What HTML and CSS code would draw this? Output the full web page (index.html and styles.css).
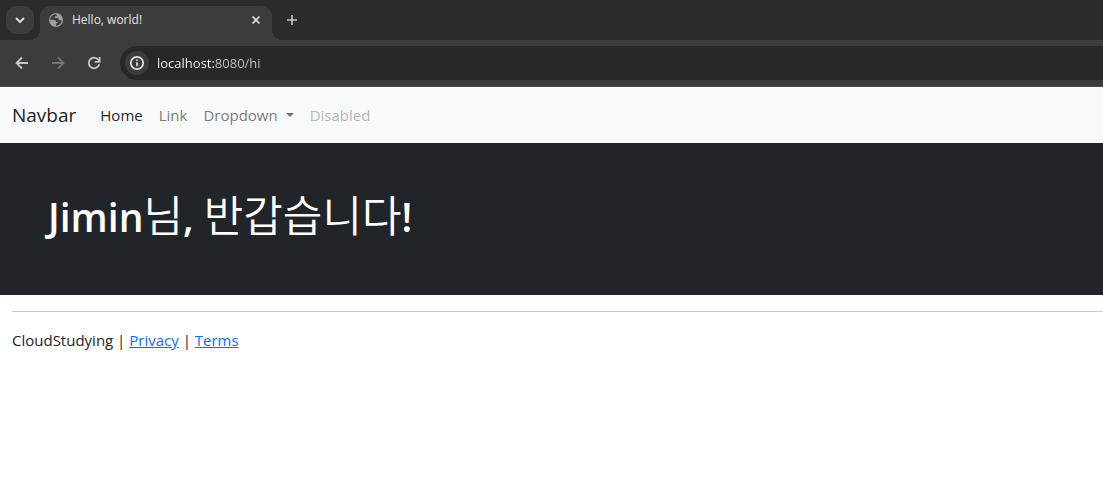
FILE: index.html
```html
<!DOCTYPE html>
<html lang="ko">
<head>
  <meta charset="UTF-8" />
  <meta name="viewport" content="width=device-width, initial-scale=1" />
  <title>Hello, world!</title>
  <link rel="stylesheet" href="styles.css">
</head>
<body>

  <!-- Browser window -->
  <div class="browser">
    <div class="tab-strip">
      <button class="tab-search" aria-label="Search tabs">
        <svg width="16" height="16" viewBox="0 0 16 16" fill="none" stroke="#e3e3e3" stroke-width="1.800"><path d="M4 6l4 4 4-4" /></svg>
      </button>
      <div class="tab">
        <svg width="16" height="16" viewBox="0 0 16 16">
          <circle cx="8" cy="8" r="7" fill="#9aa0a6" />
          <path fill="#3c3c3c" d="M8.500 2.400C5 2 2.200 4.700 2.200 7.700l3.600.1c1.400 0 2.200.8 2.200 2.100h1.700v1.300H8v2.500c3 .2 5.700-2.400 5.700-5.400h-2.100c-.7 0-1.200-.5-1.200-1.200V6H6.800V4.300h1.300c.5 0 .7-.5.7-.9z" />
        </svg>
        <span class="tab-title">Hello, world!</span>
        <button class="icon-btn" aria-label="Close tab">
          <svg width="16" height="16" viewBox="0 0 16 16" fill="none" stroke="#e3e3e3" stroke-width="1.600"><path d="M4.500 4.500l7 7M11.500 4.500l-7 7" /></svg>
        </button>
      </div>
      <button class="icon-btn new-tab" aria-label="New tab">
        <svg width="16" height="16" viewBox="0 0 16 16" fill="none" stroke="#c7c7c7" stroke-width="1.600"><path d="M8 3v10M3 8h10" /></svg>
      </button>
    </div>

    <div class="toolbar">
      <button class="icon-btn" aria-label="Back">
        <svg width="16" height="16" viewBox="0 0 16 16" fill="none" stroke="#c7c7c7" stroke-width="1.800"><path d="M14 8H3M8 2.500L2.500 8 8 13.500" /></svg>
      </button>
      <button class="icon-btn" aria-label="Forward" disabled>
        <svg width="16" height="16" viewBox="0 0 16 16" fill="none" stroke="#757575" stroke-width="1.800"><path d="M2 8h11M8 2.500L13.500 8 8 13.500" /></svg>
      </button>
      <button class="icon-btn" aria-label="Reload">
        <svg width="16" height="16" viewBox="0 0 16 16" fill="none" stroke="#c7c7c7" stroke-width="1.800"><path d="M13.200 9.200A5.300 5.300 0 1 1 12.300 4.800L13.500 6.200M13.600 2v4.800H8.800" /></svg>
      </button>
      <div class="address-bar">
        <button class="site-info" aria-label="View site information">
          <svg width="16" height="16" viewBox="0 0 16 16" fill="none" stroke="#e3e3e3" stroke-width="1.700"><circle cx="8" cy="8" r="6.200" /><path d="M8 7.200v4M8 4.500v1.600" /></svg>
        </button>
        <input class="url" type="text" value="localhost:8080/hi" aria-label="Address" spellcheck="false">
      </div>
    </div>
  </div>

  <!-- Navbar -->
  <nav class="navbar">
    <a class="navbar-brand" href="#">Navbar</a>
    <ul class="navbar-nav">
      <li><a class="nav-link active" href="#">Home</a></li>
      <li><a class="nav-link" href="#">Link</a></li>
      <li><a class="nav-link dropdown-toggle" href="#" role="button">Dropdown</a></li>
      <li><a class="nav-link disabled" href="#" aria-disabled="true">Disabled</a></li>
    </ul>
  </nav>

  <!-- Greeting -->
  <div class="jumbotron">
    <h1>Jimin<span class="hangul">님</span>, <span class="hangul">반갑습니다</span>!</h1>
  </div>

  <!-- Footer -->
  <footer class="footer">
    <hr>
    <p>CloudStudying | <a href="#">Privacy</a> | <a href="#">Terms</a></p>
  </footer>

</body>
</html>
```
FILE: styles.css
```css
* {
  box-sizing: border-box;
}
body {
  margin: 0;
  font-family: "Segoe UI", "Open Sans", "Noto Sans CJK KR", sans-serif;
  font-size: 15px;
  line-height: 24px;
  color: #212529;
  background-color: #fff;
}
button {
  display: flex;
  align-items: center;
  justify-content: center;
  padding: 0;
  border: none;
  background: none;
}

/* Browser window */
.browser {
  background-color: #3c3c3c;
  border-bottom: 1px solid #4a4a4a;
}
.tab-strip {
  display: flex;
  align-items: flex-end;
  height: 40px;
  padding-left: 6px;
  background-color: #2b2b2b;
}
.tab-search {
  width: 28px;
  height: 28px;
  margin-bottom: 6px;
  border-radius: 10px;
  background-color: #3c3c3c;
}
.tab {
  position: relative;
  display: flex;
  align-items: center;
  gap: 8px;
  width: 232px;
  height: 34px;
  margin-left: 6px;
  padding: 0 8px 6px;
  border-radius: 10px 10px 0 0;
  background-color: #3c3c3c;
}
/* curved feet of the active tab */
.tab::before,
.tab::after {
  content: "";
  position: absolute;
  bottom: 0;
  width: 10px;
  height: 10px;
}
.tab::before {
  right: 100%;
  background: radial-gradient(circle at 0 0, #2b2b2b 10px, #3c3c3c 10px);
}
.tab::after {
  left: 100%;
  background: radial-gradient(circle at 100% 0, #2b2b2b 10px, #3c3c3c 10px);
}
.tab-title {
  flex: 1;
  font-size: 12px;
  line-height: 16px;
  color: #e3e3e3;
}
.icon-btn {
  width: 16px;
  height: 16px;
}
.new-tab {
  margin: 0 0 12px 12px;
}
.toolbar {
  display: flex;
  align-items: center;
  gap: 20px;
  padding: 6px 0 6px 14px;
}
.address-bar {
  display: flex;
  flex: 1;
  align-items: center;
  gap: 8px;
  height: 34px;
  margin-left: -2px;
  padding-left: 5px;
  border-radius: 17px 0 0 17px;
  background-color: #282828;
}
.site-info {
  width: 24px;
  height: 24px;
  border-radius: 50%;
  background-color: #3c3c3c;
}
.url {
  flex: 1;
  padding: 0;
  border: none;
  outline: none;
  font-family: inherit;
  font-size: 13px;
  line-height: 20px;
  /* host is brighter than the rest of the address */
  color: transparent;
  background: linear-gradient(to right, #fff 58px, #c7c7c7 58px);
  -webkit-background-clip: text;
  background-clip: text;
}

/* Navbar */
.navbar {
  display: flex;
  align-items: center;
  gap: 16px;
  padding: 8px 12px;
  background-color: #f8f9fa;
}
.navbar-brand {
  font-size: 19px;
  line-height: 32px;
  color: #000000e6;
  text-decoration: none;
}
.navbar-nav {
  display: flex;
  margin: 0;
  padding: 0;
  list-style: none;
}
.nav-link {
  display: block;
  padding: 8px;
  color: #0000008c;
  text-decoration: none;
}
.nav-link.active {
  color: #000000e6;
}
.nav-link.disabled {
  color: #0000004d;
  pointer-events: none;
}
.dropdown-toggle::after {
  content: "";
  display: inline-block;
  margin-left: 8px;
  vertical-align: 4px;
  border-top: 4px solid;
  border-right: 4px solid transparent;
  border-left: 4px solid transparent;
}

/* Greeting */
.jumbotron {
  padding: 48px;
  color: #fff;
  background-color: #212529;
}
.jumbotron h1 {
  margin: 0 0 4px;
  font-size: 39px;
  font-weight: 600;
  line-height: 52px;
}
.hangul {
  font-size: 43px;
  font-weight: 350;
  line-height: 1;
}

/* Footer */
.footer {
  padding-left: 12px;
}
.footer hr {
  margin: 16px 0;
  border: 0;
  border-top: 1px solid #c7c8c9;
}
.footer p {
  margin: 0 0 16px;
}
.footer a {
  color: #0d6efd;
}
```
